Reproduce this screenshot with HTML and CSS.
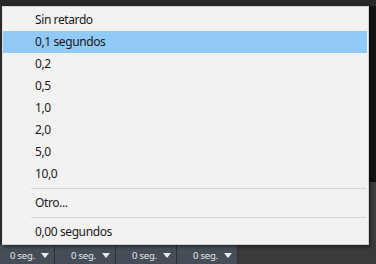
FILE: index.html
```html
<!DOCTYPE html>
<html lang="es">

<head>
    <meta charset="UTF-8">
    <title>Retardo</title>
    <link rel="stylesheet" href="styles.css">
</head>

<body>
    <div class="topBand"></div>

    <div class="middle">
        <div class="delayMenu">
            <div class="menuItem">Sin retardo</div>
            <div class="menuItem selected">0,1 segundos</div>
            <div class="menuItem">0,2</div>
            <div class="menuItem">0,5</div>
            <div class="menuItem">1,0</div>
            <div class="menuItem">2,0</div>
            <div class="menuItem">5,0</div>
            <div class="menuItem">10,0</div>
            <div class="menuSeparator"></div>
            <div class="menuItem">Otro...</div>
            <div class="menuSeparator"></div>
            <div class="menuItem">0,00 segundos</div>
        </div>
        <div class="sideColumn">
            <div class="sideDark"></div>
            <div class="sideGray"></div>
        </div>
    </div>

    <div class="statusBar">
        <div class="delayCell first">0 seg.<span class="arrow"></span></div>
        <div class="delayCell">0 seg.<span class="arrow"></span></div>
        <div class="delayCell">0 seg.<span class="arrow"></span></div>
        <div class="delayCell">0 seg.<span class="arrow"></span></div>
    </div>
</body>

</html>
```

FILE: styles.css
```css
body {
    margin: 0;
    width: 376px;
    height: 264px;
    overflow: hidden;
    background-color: #3b3b3b;
    font-family: "Noto Sans", "Open Sans", sans-serif;
    font-size: 12px;
    display: flex;
    flex-direction: column;
}

.topBand {
    height: 6px;
    background-color: #272727;
    flex-shrink: 0;
}

.middle {
    display: flex;
    height: 239px;
    flex-shrink: 0;
    background-color: #2a2a2a;
}

.delayMenu {
    margin-left: 2px;
    width: 364px;
    padding: 2px 1px 1px 0;
    background-color: #f2f2f2;
    border: 1px solid #cfcfcf;
    border-left-color: #e0e0e0;
    box-shadow: 2px 2px 3px rgba(0, 0, 0, 0.45);
    color: #1a1a1a;
    letter-spacing: -0.4px;
    position: relative;
    z-index: 1;
}

.menuItem {
    height: 22px;
    line-height: 22px;
    padding-left: 32px;
}

.menuItem.selected {
    background-color: #91c9f7;
}

.menuSeparator {
    height: 1px;
    margin: 3px 1px 3px 28px;
    background-color: #d7d7d7;
}

.sideColumn {
    flex: 1;
    display: flex;
    flex-direction: column;
}

.sideDark {
    height: 176px;
    background-color: #131313;
}

.sideGray {
    flex: 1;
    background-color: #3d3d3d;
}

.statusBar {
    flex: 1;
    display: flex;
    background-color: #3a3a3a;
}

.delayCell {
    width: 61px;
    display: flex;
    align-items: center;
    justify-content: flex-end;
    gap: 6px;
    padding: 1px 5px 0 0;
    box-sizing: border-box;
    background-color: #474d58;
    border-right: 1px solid #2d3238;
    color: #e4e6ea;
    font-size: 9.5px;
    letter-spacing: -0.2px;
}

.delayCell.first {
    width: 55px;
}

.arrow {
    width: 0;
    height: 0;
    border-left: 4px solid transparent;
    border-right: 4px solid transparent;
    border-top: 5px solid #e8eaee;
}
```
